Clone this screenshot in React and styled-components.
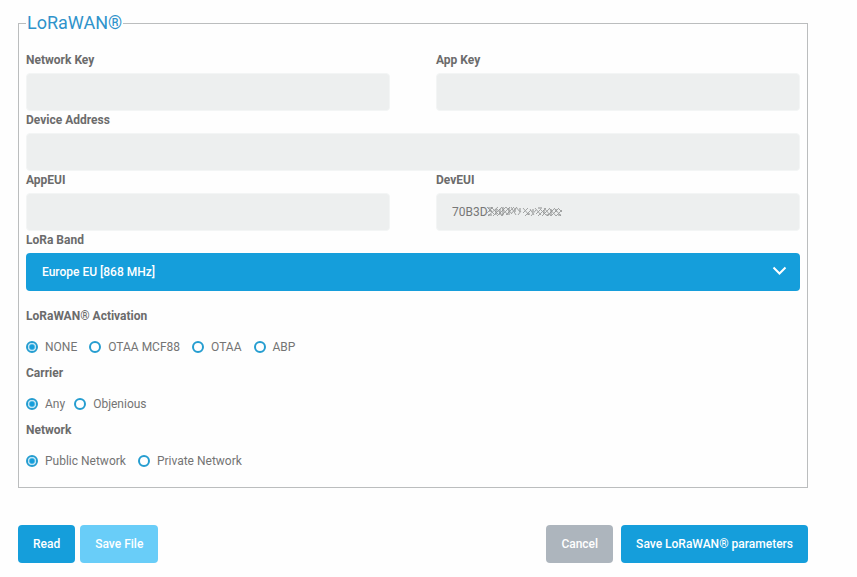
import React from "react";
import styled, { createGlobalStyle } from "styled-components";

const GlobalStyle = createGlobalStyle`
  * {
    box-sizing: border-box;
  }

  body {
    margin: 0;
    background-color: #fefefe;
    color: #6b6b6b;
    font-family: Roboto, "Liberation Sans", sans-serif;
    font-size: 12px;
  }
`;

const Form = styled.form`
  padding: 12px 49px 14px 18px;
`;

const Panel = styled.fieldset`
  margin: 0;
  padding: 0 7px 9px;
  border: 1px solid #bbbdbe;
`;

const Legend = styled.legend`
  padding: 0 1px;
  color: #2f93cb;
  font-size: 18px;
  line-height: 22px;
`;

const Fields = styled.div`
  display: grid;
  grid-template-columns: 1fr 1fr;
  column-gap: 46px;
  padding-top: 17px;
`;

const Field = styled.div`
  grid-column: ${({ $wide }) => ($wide ? "1 / -1" : "auto")};
`;

const Label = styled.label`
  display: block;
  height: 22px;
  font-weight: 700;
  line-height: 18px;
`;

const Control = styled.div`
  position: relative;
`;

const Input = styled.input`
  display: block;
  width: 100%;
  height: 38px;
  padding: 0 15px;
  border: 1px solid #f3f5f5;
  border-radius: 4px;
  background-color: #edefef;
  color: #777777;
  font: inherit;
`;

const Select = styled.select`
  display: block;
  width: 100%;
  height: 38px;
  padding: 0 16px;
  border: 0;
  border-radius: 4px;
  appearance: none;
  background-color: #159edb;
  color: #ffffff;
  font: inherit;
  font-weight: 500;
`;

const Chevron = styled.svg`
  position: absolute;
  top: 12px;
  right: 13px;
  pointer-events: none;
`;

const Scribble = styled.svg`
  position: absolute;
  top: 12px;
  left: 51px;
  pointer-events: none;
`;

const Groups = styled.div`
  padding-top: 16px;
`;

const Group = styled.div`
  padding-bottom: 8px;
`;

const GroupTitle = styled.div`
  margin-bottom: 13px;
  font-weight: 700;
  line-height: 18px;
`;

const Options = styled.div`
  display: flex;
  flex-wrap: wrap;
  gap: ${({ $tight }) => ($tight ? "9px" : "12px")};
`;

const Option = styled.label`
  display: flex;
  align-items: center;
  gap: 7px;
  color: #747474;
  line-height: 18px;
`;

const Radio = styled.input`
  width: 12px;
  height: 12px;
  margin: 0;
  border: 2px solid #259dd0;
  border-radius: 50%;
  appearance: none;
  background-color: #ffffff;

  &:checked {
    background-image: radial-gradient(circle, #159edb 2px, #ffffff 4px);
  }
`;

const Actions = styled.div`
  display: flex;
  justify-content: space-between;
  margin-top: 37px;
`;

const ButtonRow = styled.div`
  display: flex;
  gap: ${({ $gap }) => $gap};
`;

const colors = {
  primary: "#159edb",
  light: "#69cdf8",
  muted: "#adb5bd",
};

const Button = styled.button`
  height: 38px;
  padding: 0 15px;
  border: 0;
  border-radius: 4px;
  background-color: ${({ $color }) => colors[$color]};
  color: #ffffff;
  font: inherit;
  font-weight: 500;
`;

const groups = [
  {
    name: "activation",
    title: "LoRaWAN® Activation",
    options: ["NONE", "OTAA MCF88", "OTAA", "ABP"],
  },
  { name: "carrier", title: "Carrier", options: ["Any", "Objenious"], tight: true },
  { name: "network", title: "Network", options: ["Public Network", "Private Network"] },
];

const TextField = ({ id, label, value = "", wide, children }) => (
  <Field $wide={wide}>
    <Label htmlFor={id}>{label}</Label>
    <Control>
      <Input id={id} type="text" defaultValue={value} />
      {children}
    </Control>
  </Field>
);

const App = () => {
  return (
    <>
      <GlobalStyle />
      <Form onSubmit={(e) => e.preventDefault()}>
        <Panel>
          <Legend>LoRaWAN®</Legend>
          <Fields>
            <TextField id="network-key" label="Network Key" />
            <TextField id="app-key" label="App Key" />
            <TextField id="device-address" label="Device Address" wide />
            <TextField id="app-eui" label="AppEUI" />
            <TextField id="dev-eui" label="DevEUI" value="70B3D">
              <Scribble width="76" height="13" viewBox="0 0 76 13" fill="none" aria-hidden="true">
                <path
                  d="M0 8l6-6M1 11l10-9M6 11l9-9M10 11l9-9M14 11l9-9M19 10l8-8M24 9l6-7M31 10l3-4M36 8l5-5M38 11l6-6M44 11l5-6M49 9l5-5M51 11l8-8M55 11l8-8M60 11l8-8M64 11l8-8M69 11l6-6"
                  stroke="#a2a4a4"
                />
                <path
                  d="M0 2l8 8M4 2l8 8M9 3l7 8M14 2l7 8M19 2l6 7M24 2l5 8M29 2l4 5M36 3l6 7M43 4l4 6M48 3l6 7M53 4l6 6M57 3l7 8M62 3l7 8M67 3l7 8M71 3l4 4"
                  stroke="#a2a4a4"
                />
                <path
                  d="M1 3h4M2 6h3M1 10h4M9 4v6M13 4v6M16 2v8M22 3v7M28 3v4M33 3v3M40 9h3M46 4v3M51 3h4M57 5v4M59 10h3M64 4v6M69 4v3M71 10h3"
                  stroke="#8a8c8c"
                />
              </Scribble>
            </TextField>
            <Field $wide>
              <Label htmlFor="lora-band">LoRa Band</Label>
              <Control>
                <Select id="lora-band" defaultValue="eu868">
                  <option value="eu868">Europe EU [868 MHz]</option>
                </Select>
                <Chevron width="15" height="12" viewBox="0 0 15 12" fill="none" aria-hidden="true">
                  <path d="M1.5 2.5l6 6 6-6" stroke="#ffffff" strokeWidth="2" />
                </Chevron>
              </Control>
            </Field>
          </Fields>
          <Groups>
            {groups.map(({ name, title, options, tight }) => (
              <Group key={name} role="radiogroup" aria-labelledby={name}>
                <GroupTitle id={name}>{title}</GroupTitle>
                <Options $tight={tight}>
                  {options.map((option, i) => (
                    <Option key={option}>
                      <Radio type="radio" name={name} defaultChecked={i === 0} />
                      {option}
                    </Option>
                  ))}
                </Options>
              </Group>
            ))}
          </Groups>
        </Panel>
        <Actions>
          <ButtonRow $gap="5px">
            <Button type="button" $color="primary">Read</Button>
            <Button type="button" $color="light">Save File</Button>
          </ButtonRow>
          <ButtonRow $gap="8px">
            <Button type="button" $color="muted">Cancel</Button>
            <Button type="submit" $color="primary">Save LoRaWAN® parameters</Button>
          </ButtonRow>
        </Actions>
      </Form>
    </>
  );
};

export default App;
